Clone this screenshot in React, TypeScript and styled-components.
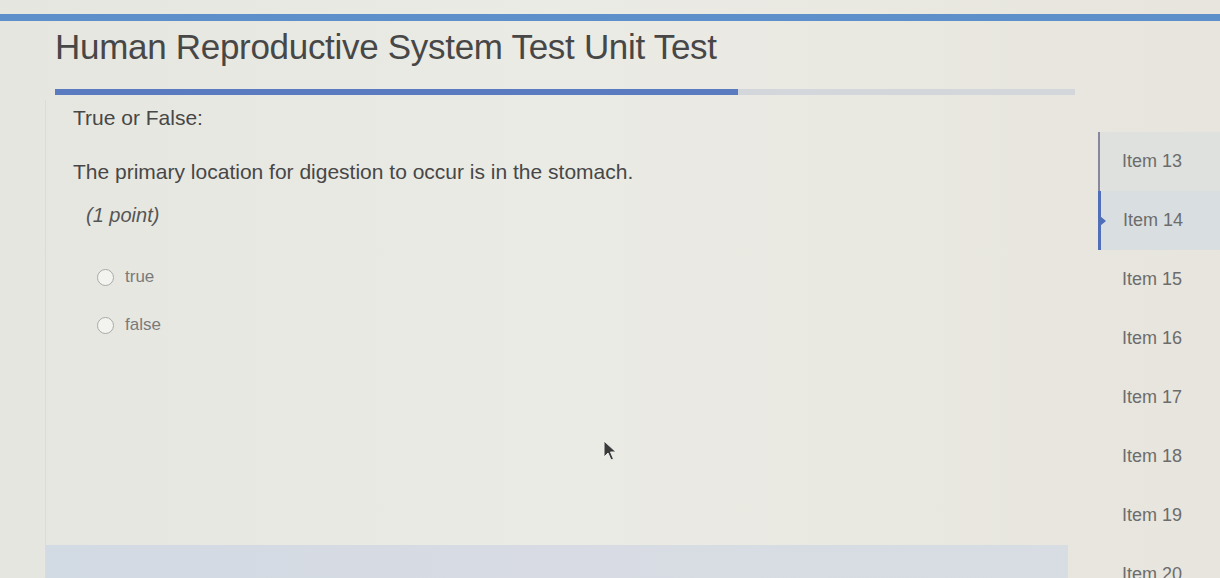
import * as React from 'react';
import styled, { createGlobalStyle } from 'styled-components';

const GlobalStyle = createGlobalStyle`
  html, body {
    margin: 0;
    padding: 0;
    background: #e8e8e2;
    font-family: "Liberation Sans", Arial, sans-serif;
  }
  #root {
    width: 1220px;
    height: 578px;
    overflow: hidden;
  }
`;

const Page = styled.div`
  position: relative;
  width: 1220px;
  height: 578px;
  display: flex;
  flex-direction: column;
  background: linear-gradient(90deg, #e6e6e0 0%, #ebebe5 45%, #e7e5dd 100%);
  overflow: hidden;
`;

const TopStripe = styled.div`
  margin-top: 14px;
  height: 7px;
  background: #5d8fcb;
`;

const Header = styled.header`
  padding: 6px 0 0 55px;
  display: flex;
  flex-direction: column;
  gap: 22px;
`;

const Title = styled.h1`
  margin: 0;
  font-size: 35px;
  font-weight: 400;
  color: #474747;
  letter-spacing: -0.3px;
  line-height: 40px;
`;

const Track = styled.div`
  width: 1020px;
  height: 6px;
  background: #d3d6da;
`;

const Fill = styled.div`
  height: 100%;
  background: #5a7bbf;
`;

const Body = styled.div`
  flex: 1;
  display: flex;
  margin-top: 5px;
  min-height: 0;
`;

const Main = styled.main`
  flex: 1;
  margin-left: 45px;
  border-left: 1px solid #dcdcd6;
  display: flex;
  flex-direction: column;
`;

const Question = styled.section`
  flex: 1;
  padding: 6px 0 0 27px;
  display: flex;
  flex-direction: column;
`;

const Prompt = styled.p<{ $gap: number }>`
  margin: 0 0 ${p => p.$gap}px 0;
  font-size: 21px;
  line-height: 24px;
  color: #474747;
`;

const Points = styled.p`
  margin: 0 0 40px 13px;
  font-size: 20px;
  line-height: 24px;
  font-style: italic;
  color: #555;
`;

const Options = styled.div`
  display: flex;
  flex-direction: column;
  gap: 28px;
  padding-left: 24px;
`;

const Option = styled.label`
  display: flex;
  align-items: center;
  gap: 11px;
  font-size: 17px;
  line-height: 20px;
  color: #7a7a7a;
`;

const Radio = styled.span`
  width: 17px;
  height: 17px;
  border-radius: 50%;
  border: 1.5px solid #a9a9a9;
  background: #f3f3ef;
  box-sizing: border-box;
`;

const Footer = styled.div`
  height: 33px;
  background: linear-gradient(90deg, #d2dae3 0%, #d8dbe3 50%, #d7dde2 100%);
  margin-right: 30px;
`;

const Sidebar = styled.nav`
  width: 122px;
  padding-top: 32px;
  display: flex;
  flex-direction: column;
`;

const Item = styled.div<{ $visited?: boolean; $active?: boolean }>`
  position: relative;
  flex-shrink: 0;
  height: 59px;
  display: flex;
  align-items: center;
  padding-left: 22px;
  font-size: 18px;
  color: #6c6c6c;
  background: ${p => (p.$active ? '#d9dfe0' : p.$visited ? '#dee1de' : 'transparent')};
  border-left: ${p => (p.$active ? '3px solid #4f6fb8' : p.$visited ? '2px solid #8a86a0' : '2px solid transparent')};
  box-sizing: border-box;
`;

const Marker = styled.span`
  position: absolute;
  left: -1px;
  top: 50%;
  transform: translateY(-50%);
  width: 0;
  height: 0;
  border-top: 5px solid transparent;
  border-bottom: 5px solid transparent;
  border-left: 6px solid #4f6fb8;
`;

const Cursor = styled.svg`
  position: absolute;
  left: 603px;
  top: 440px;
`;

const items = [13, 14, 15, 16, 17, 18, 19, 20];

export default function App() {
  return (
    <Page>
      <GlobalStyle />
      <TopStripe />
      <Header>
        <Title>Human Reproductive System Test Unit Test</Title>
        <Track>
          <Fill style={{ width: `${(13 / 20) * 100 + 2}%` }} />
        </Track>
      </Header>
      <Body>
        <Main>
          <Question>
            <Prompt $gap={30}>True or False:</Prompt>
            <Prompt $gap={19}>The primary location for digestion to occur is in the stomach.</Prompt>
            <Points>(1 point)</Points>
            <Options>
              <Option><Radio />true</Option>
              <Option><Radio />false</Option>
            </Options>
          </Question>
          <Footer />
        </Main>
        <Sidebar>
          {items.map(n => (
            <Item key={n} $visited={n <= 14} $active={n === 14}>
              {n === 14 && <Marker />}
              Item {n}
            </Item>
          ))}
        </Sidebar>
      </Body>
      <Cursor width="14" height="22" viewBox="0 0 14 22">
        <path d="M1 1 L1 17 L5 13 L8 20 L10.5 19 L7.5 12 L13 12 Z" fill="#3a3a3a" stroke="#eee" strokeWidth="1" />
      </Cursor>
    </Page>
  );
}
